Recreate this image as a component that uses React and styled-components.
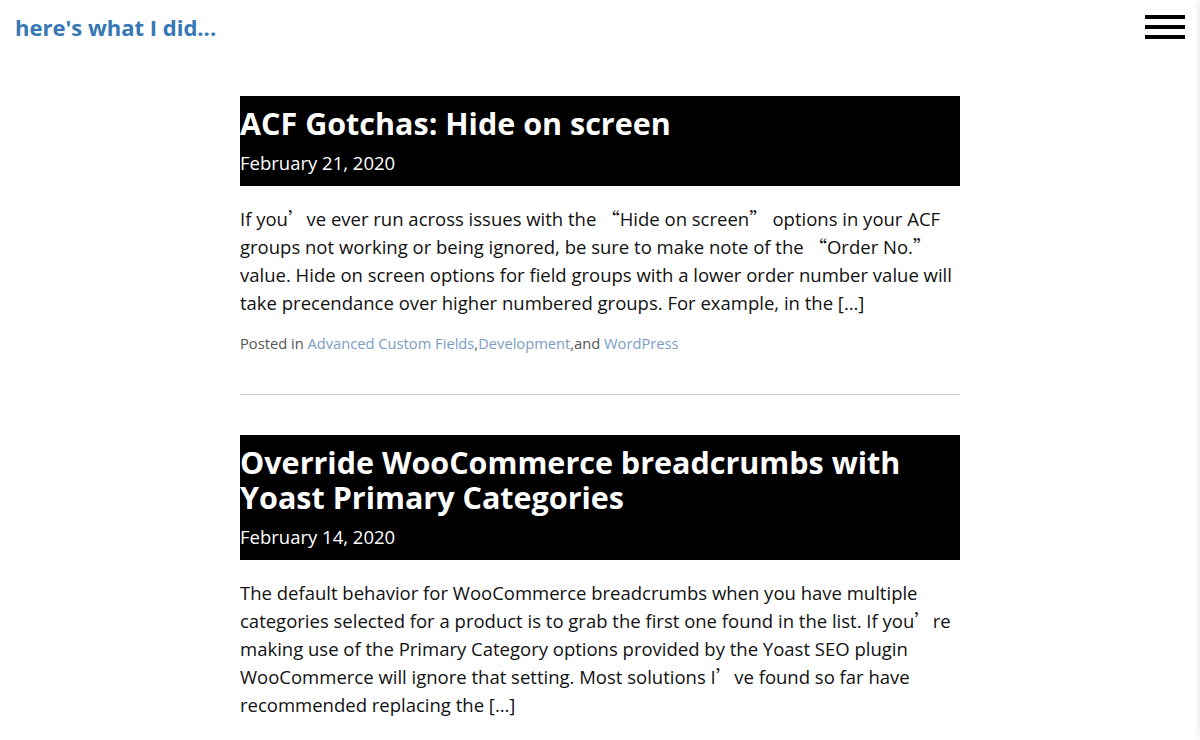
import React from 'react'
import styled, { createGlobalStyle } from 'styled-components'

const GlobalStyle = createGlobalStyle`
  html, body {
    margin: 0;
    padding: 0;
    background: #fff;
    overflow: hidden;
  }
  body {
    font-family: "Open Sans", "Noto Sans CJK SC", sans-serif;
    color: #111;
  }
`

const posts = [
  {
    title: 'ACF Gotchas: Hide on screen',
    date: 'February 21, 2020',
    excerpt: [
      'If you', '’', 've ever run across issues with the ', '“', 'Hide on screen', '”',
      ' options in your ACF groups not working or being ignored, be sure to make note of the ',
      '“', 'Order No.', '”',
      ' value. Hide on screen options for field groups with a lower order number value will take precendance over higher numbered groups. For example, in the […]'
    ],
    categories: ['Advanced Custom Fields', 'Development', 'WordPress'],
  },
  {
    title: 'Override WooCommerce breadcrumbs with Yoast Primary Categories',
    date: 'February 14, 2020',
    excerpt: [
      'The default behavior for WooCommerce breadcrumbs when you have multiple categories selected for a product is to grab the first one found in the list. If you',
      '’', 're making use of the Primary Category options provided by the Yoast SEO plugin WooCommerce will ignore that setting. Most solutions I', '’',
      've found so far have recommended replacing the […]'
    ],
    categories: [],
  },
]

const isQuote = (s) => s === '’' || s === '“' || s === '”'

const App = () => {
  return (
    <Page>
      <GlobalStyle />
      <TopBar>
        <SiteTitle href="#">here's what I did...</SiteTitle>
        <MenuButton aria-label="Menu">
          <Bar />
          <Bar />
          <Bar />
        </MenuButton>
      </TopBar>
      <Drawer />
      <Main>
        {posts.map((post, i) => (
          <Article key={post.title} last={i === posts.length - 1}>
            <PostHeader>
              <PostTitle>{post.title}</PostTitle>
              <PostDate>{post.date}</PostDate>
            </PostHeader>
            <Excerpt>
              {post.excerpt.map((part, j) =>
                isQuote(part) ? <Quote key={j}>{part}</Quote> : <React.Fragment key={j}>{part}</React.Fragment>
              )}
            </Excerpt>
            {post.categories.length > 0 && (
              <Meta>
                Posted in <CatLink href="#">{post.categories[0]}</CatLink>,
                <CatLink href="#">{post.categories[1]}</CatLink>,and <CatLink href="#">{post.categories[2]}</CatLink>
              </Meta>
            )}
          </Article>
        ))}
      </Main>
    </Page>
  )
}

const Page = styled.div`
  min-height: 740px;
`

const TopBar = styled.header`
  display: flex;
  justify-content: space-between;
  align-items: flex-start;
  padding: 13px 15px 0 16px;
  height: 43px;
`

const SiteTitle = styled.a`
  font-size: 22px;
  font-weight: 700;
  color: #3677b4;
  text-decoration: none;
  line-height: 28px;
  margin-left: -1px;
`

const MenuButton = styled.button`
  display: flex;
  flex-direction: column;
  gap: 6px;
  width: 40px;
  margin: 2px 0 0;
  padding: 0;
  border: 0;
  background: none;
  cursor: pointer;
`

const Bar = styled.span`
  display: block;
  height: 4px;
  width: 40px;
  background: #000;
`

const Drawer = styled.nav`
  position: fixed;
  top: 0;
  left: 100%;
  width: 280px;
  height: 100%;
  background: #fff;
  box-shadow: 0 0 8px rgba(0, 0, 0, 0.12);
`

const Main = styled.main`
  width: 720px;
  margin: 0 auto;
  padding-top: 40px;
`

const Article = styled.article`
  padding-bottom: ${(p) => (p.last ? '0' : '40px')};
  margin-bottom: ${(p) => (p.last ? '0' : '40px')};
  border-bottom: ${(p) => (p.last ? 'none' : '1px solid #ccc')};
`

const PostHeader = styled.div`
  background: #000;
  color: #fff;
  padding: 10px 0 9px;
`

const PostTitle = styled.h2`
  margin: 0;
  font-size: 30.5px;
  line-height: 35px;
  font-weight: 700;
`

const PostDate = styled.div`
  margin-top: 8px;
  font-size: 18.5px;
  line-height: 28px;
`

const Excerpt = styled.p`
  margin: 19px 0 0;
  font-size: 18.5px;
  line-height: 28px;
`

const Quote = styled.span`
  font-family: "Noto Sans CJK SC", sans-serif;
  line-height: 0;
`

const Meta = styled.div`
  margin-top: 15px;
  font-size: 14.7px;
  line-height: 22px;
  color: #555;
`

const CatLink = styled.a`
  color: #7b9dc5;
  text-decoration: none;
`

export default App
